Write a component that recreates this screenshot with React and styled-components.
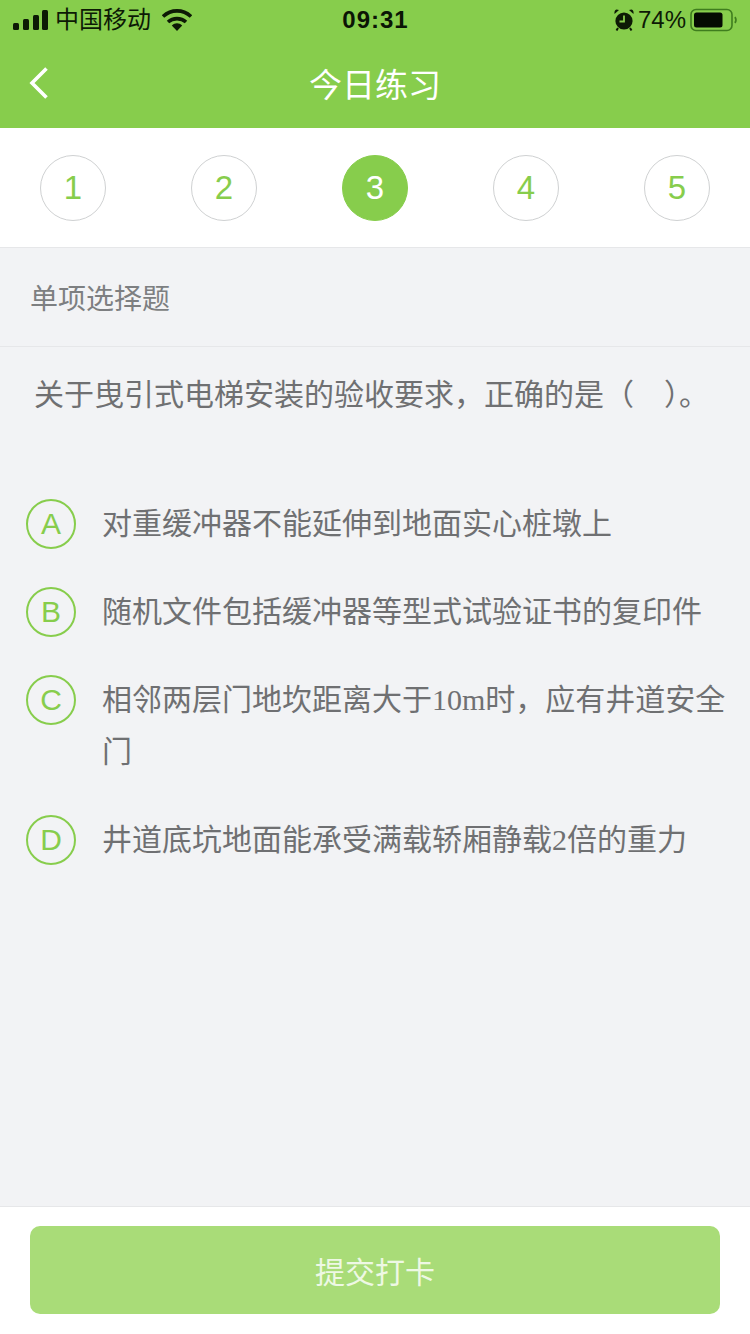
import React from 'react';
import styled, { createGlobalStyle } from 'styled-components';

const GlobalStyle = createGlobalStyle`
  html, body {
    margin: 0;
    padding: 0;
    background: #f2f3f5;
    font-family: "Liberation Sans", "Noto Sans CJK SC", sans-serif;
  }
  * { box-sizing: border-box; }
`;

const Page = styled.div`
  width: 750px;
  height: 1334px;
  display: flex;
  flex-direction: column;
  background: #f2f3f5;
  overflow: hidden;
`;

const Header = styled.header`
  height: 128px;
  flex: none;
  background: #87cd4c;
  display: flex;
  flex-direction: column;
`;

const StatusBar = styled.div`
  height: 40px;
  padding: 0 12px 0 13px;
  display: grid;
  grid-template-columns: 1fr auto 1fr;
  align-items: center;
  color: #0d1a05;
`;

const StatusSide = styled.div`
  display: flex;
  align-items: center;
  gap: ${p => p.$gap || 6}px;
  justify-content: ${p => (p.$end ? 'flex-end' : 'flex-start')};
`;

const Carrier = styled.span`
  font-size: 24px;
  line-height: 40px;
  margin-right: 5px;
`;

const Clock = styled.span`
  font-size: 24px;
  font-weight: 700;
  letter-spacing: 1px;
  color: #0b1505;
`;

const Percent = styled.span`
  font-size: 24px;
`;

const NavBar = styled.div`
  flex: 1;
  padding-bottom: 2px;
  position: relative;
  display: flex;
  align-items: center;
  justify-content: center;
`;

const BackButton = styled.button`
  position: absolute;
  left: 28px;
  top: 26px;
  padding: 0;
  border: 0;
  background: none;
  display: flex;
`;

const Title = styled.h1`
  margin: 0;
  color: #fff;
  font-size: 33px;
  font-weight: 400;
`;

const Stepper = styled.div`
  height: 120px;
  flex: none;
  padding: 0 40px;
  background: #fff;
  border-bottom: 1px solid #e6e7e9;
  display: flex;
  align-items: center;
  justify-content: space-between;
`;

const Step = styled.div`
  width: 66px;
  height: 66px;
  border-radius: 50%;
  border: 1px solid ${p => (p.$active ? '#87cd4c' : '#cfd1d2')};
  background: ${p => (p.$active ? '#87cd4c' : '#fff')};
  color: ${p => (p.$active ? '#fff' : '#87cd4c')};
  font-size: 33px;
  display: flex;
  align-items: center;
  justify-content: center;
`;

const SectionLabel = styled.div`
  height: 99px;
  flex: none;
  padding: 0 0 0 30px;
  border-bottom: 1px solid #e6e7e9;
  color: #7d7f81;
  font-size: 28px;
  display: flex;
  align-items: center;
`;

const Question = styled.p`
  margin: 0;
  padding: 22px 0 0 34px;
  height: 151px;
  flex: none;
  font-size: 30px;
  line-height: 52px;
  color: #6f7072;
  white-space: nowrap;
`;

const Options = styled.ul`
  list-style: none;
  margin: 0;
  padding: 0 24px 0 26px;
  flex: 1;
  display: flex;
  flex-direction: column;
  gap: 36px;
`;

const Option = styled.li`
  display: flex;
  gap: 26px;
  align-items: flex-start;
`;

const Badge = styled.span`
  flex: none;
  width: 50px;
  height: 50px;
  margin-top: 1px;
  border-radius: 50%;
  border: 2px solid #87cd4c;
  color: #87cd4c;
  font-size: 30px;
  display: flex;
  align-items: center;
  justify-content: center;
`;

const OptionText = styled.span`
  font-size: 30px;
  line-height: 52px;
  color: #6f7072;
`;

const Latin = styled.span`
  font-family: "Liberation Serif", serif;
`;

const Footer = styled.footer`
  height: 128px;
  flex: none;
  padding: 19px 30px 20px;
  background: #fff;
  border-top: 1px solid #e6e7e9;
`;

const Submit = styled.button`
  width: 100%;
  height: 88px;
  border: 0;
  border-radius: 10px;
  background: #a9dc78;
  color: #eef8e4;
  font-family: inherit;
  font-size: 30px;
`;

const SignalBars = () => (
  <svg width="36" height="20" viewBox="0 0 36 20">
    <rect x="0" y="13" width="6" height="7" rx="1.5" fill="#0d1a05" />
    <rect x="10" y="9" width="6" height="11" rx="1.5" fill="#0d1a05" />
    <rect x="20" y="5" width="6" height="15" rx="1.5" fill="#0d1a05" />
    <rect x="29" y="0" width="6" height="20" rx="1.5" fill="#0d1a05" />
  </svg>
);

const Wifi = () => (
  <svg width="30" height="22" viewBox="0 0 30 22">
    <path d="M1 7.5 C9 0 21 0 29 7.5" fill="none" stroke="#0d1a05" strokeWidth="3.6" />
    <path d="M6 13 C11 8.5 19 8.5 24 13" fill="none" stroke="#0d1a05" strokeWidth="3.6" />
    <path d="M9.8 16.5 C13 13.6 17 13.6 20.2 16.5 L15 22 Z" fill="#0d1a05" />
  </svg>
);

const Alarm = () => (
  <svg width="20" height="22" viewBox="0 0 20 22">
    <circle cx="10" cy="12" r="8.6" fill="#0d1a05" />
    <path d="M10 6.5 V12.5 H5.5" fill="none" stroke="#87cd4c" strokeWidth="1.8" />
    <path d="M0.5 5 L5 1 L2.5 0.6 Q0 1.5 0.5 5 Z M19.5 5 L15 1 L17.5 0.6 Q20 1.5 19.5 5 Z" fill="#0d1a05" />
    <path d="M4 19 L2.5 21.5 M16 19 L17.5 21.5" stroke="#0d1a05" strokeWidth="2" />
  </svg>
);

const Battery = () => (
  <svg width="48" height="24" viewBox="0 0 48 24">
    <rect x="1" y="1.5" width="41" height="21" rx="5" fill="none" stroke="#3f7d1e" strokeWidth="1.6" />
    <rect x="4" y="4.5" width="28.5" height="15" rx="2.5" fill="#050a02" />
    <path d="M45 9 Q47 12 45 15" fill="none" stroke="#3f7d1e" strokeWidth="1.6" />
  </svg>
);

const BackIcon = () => (
  <svg width="22" height="34" viewBox="0 0 22 34">
    <path d="M18.5 2.5 L4 17 L18.5 31.5" fill="none" stroke="#fff" strokeWidth="3.6" />
  </svg>
);

const steps = [1, 2, 3, 4, 5];

const options = [
  { key: 'A', text: '对重缓冲器不能延伸到地面实心桩墩上' },
  { key: 'B', text: '随机文件包括缓冲器等型式试验证书的复印件' },
  { key: 'C', text: <>相邻两层门地坎距离大于<Latin>10m</Latin>时，应有井道安全门</> },
  { key: 'D', text: <>井道底坑地面能承受满载轿厢静载<Latin>2</Latin>倍的重力</> },
];

const App = () => {
  return (
    <Page>
      <GlobalStyle />
      <Header>
        <StatusBar>
          <StatusSide>
            <SignalBars />
            <Carrier>中国移动</Carrier>
            <Wifi />
          </StatusSide>
          <Clock>09:31</Clock>
          <StatusSide $end $gap={4}>
            <Alarm />
            <Percent>74%</Percent>
            <Battery />
          </StatusSide>
        </StatusBar>
        <NavBar>
          <BackButton aria-label="返回"><BackIcon /></BackButton>
          <Title>今日练习</Title>
        </NavBar>
      </Header>
      <Stepper>
        {steps.map(step => (
          <Step key={step} $active={step === 3}>{step}</Step>
        ))}
      </Stepper>
      <SectionLabel>单项选择题</SectionLabel>
      <Question>关于曳引式电梯安装的验收要求，正确的是（　）。</Question>
      <Options>
        {options.map(option => (
          <Option key={option.key}>
            <Badge>{option.key}</Badge>
            <OptionText>{option.text}</OptionText>
          </Option>
        ))}
      </Options>
      <Footer>
        <Submit>提交打卡</Submit>
      </Footer>
    </Page>
  );
};

export default App;
